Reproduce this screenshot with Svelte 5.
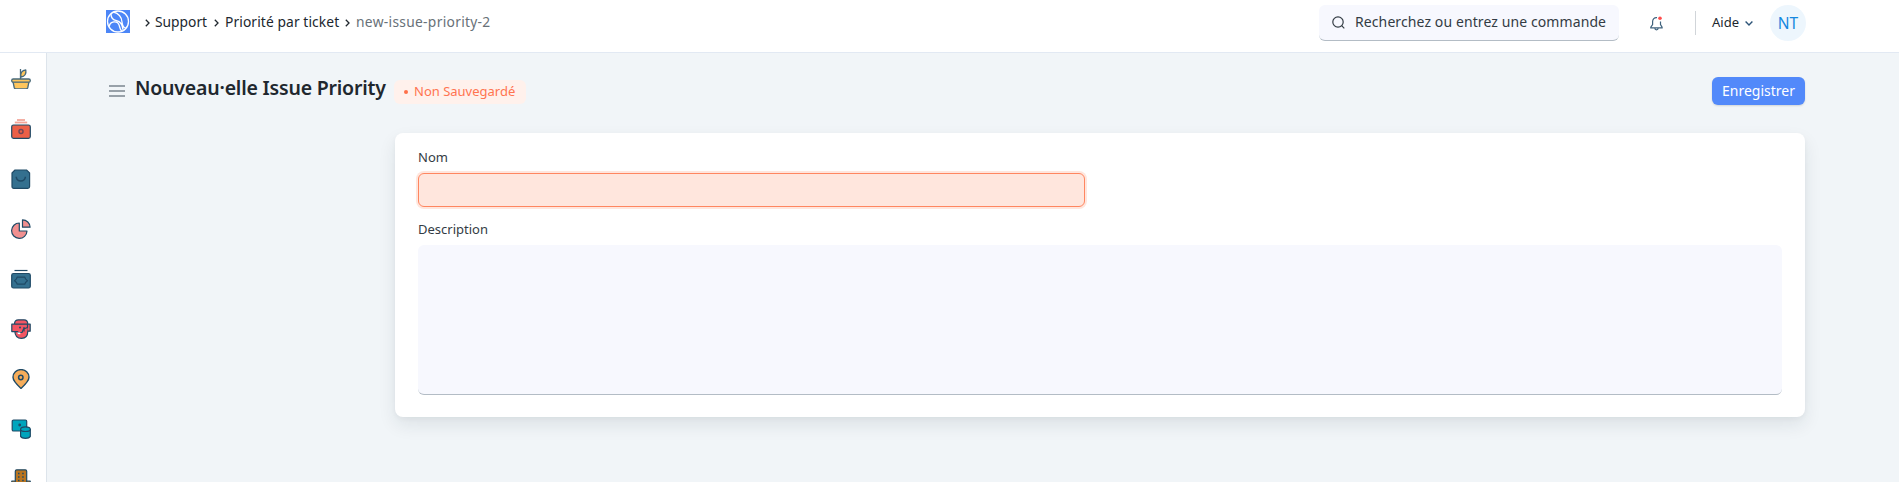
<script>
  const ink = '#1f4a66';
  const modules = ['plant', 'wallet', 'bag', 'pie', 'cash', 'mask', 'pin', 'data', 'building'];
</script>

<div class="page">
  <header>
    <nav class="crumbs">
      <svg class="logo" width="24" height="23" viewBox="0 0 24 23">
        <rect width="24" height="23" fill="#4c86f7" />
        <g fill="none" stroke="#fff" stroke-width="1.300">
          <circle cx="12" cy="11.500" r="10.500" />
          <path d="M7.500 2.200C13 3.500 15.500 7 16 12c.3 3.500 1.500 6 4.200 6.200M5 4C5 8 7 10 10.500 10.600c3.800.8 6 4 6.500 9M3.300 16.500c.5-5.500 8.500-6.500 10-.8.600 2.200.8 4.100 2.500 5.500" />
        </g>
      </svg>
      <svg class="sep" width="5" height="8" viewBox="0 0 5 8"><path d="M.8.8 4 4 .8 7.200" /></svg>
      <span class="c1">Support</span>
      <svg class="sep" width="5" height="8" viewBox="0 0 5 8"><path d="M.8.8 4 4 .8 7.200" /></svg>
      <span class="c2">Priorité par ticket</span>
      <svg class="sep" width="5" height="8" viewBox="0 0 5 8"><path d="M.8.8 4 4 .8 7.200" /></svg>
      <span class="c3">new-issue-priority-2</span>
    </nav>
    <div class="tools">
      <div class="search">
        <svg width="13" height="13" viewBox="0 0 13 13" fill="none" stroke="#333c44" stroke-width="1.2"><circle cx="6" cy="6" r="5.200" /><path d="m9.700 9.700 2.600 2.600" /></svg>
        <span>Recherchez ou entrez une commande</span>
      </div>
      <svg class="bell" width="13" height="15" viewBox="0 0 13 15" fill="none" stroke="#3f627d" stroke-width="1.200">
        <path d="M7 1.600C4.200 1.300 2.600 3.200 2.600 5.600v3L.8 11.200v.6h11.300v-.6l-1.600-2.600V5.500M4.800 12c.1 2.400 3.300 2.400 3.400 0" />
        <circle cx="10" cy="2.300" r="1.800" fill="#ff4d4d" stroke="none" />
      </svg>
      <i class="rule"></i>
      <span class="help">Aide</span>
      <svg class="down" width="8" height="5" viewBox="0 0 8 5"><path d="M.6.600 4 4 7.400.600" fill="none" stroke="#2d5478" stroke-width="1.400" /></svg>
      <span class="avatar"><b>NT</b></span>
    </div>
  </header>

  <div class="body">
    <aside>
      {#each modules as m}
        <svg width="20" height="20" viewBox="0 0 20 20" stroke={ink} stroke-width="1.200" stroke-linejoin="round" fill="none">
          {#if m === 'plant'}
            <g stroke="#47697b" stroke-width="1.300">
              <path d="M9.500 10V0" /><path d="M10 8C9 4 11 1.300 14.800 1c.7 3.800-1 6.500-4.800 7Z" fill="#ffc65c" />
              <path d="M2 12.500h16l-1.200 6q-.3 1.300-1.500 1.300H4.700q-1.200 0-1.500-1.300Z" fill="#ffc65c" /><rect x=".7" y="10" width="18.600" height="3.200" rx="1.500" fill="#ffc65c" />
            </g>
          {:else if m === 'wallet'}
            <path d="M6 1h8" stroke="#e8604a" stroke-width="1" /><path d="M3.800 3.500h12.400" stroke="#f4a497" stroke-width="1.800" />
            <rect x=".7" y="6" width="18.600" height="13.300" rx="1.800" fill="#ec5f47" /><circle cx="10" cy="12.600" r="2" stroke-width="1.500" stroke="#744656" />
          {:else if m === 'bag'}
            <path d="M4 1h11.500L18.600 4v13.500q0 1.800-1.800 1.800H2.800Q1 19.300 1 17.500V4Z" fill="#34708f" /><path d="M5.300 7.800v.6c.7 4.700 8.200 4.700 9 0v-.6" stroke-width="1.500" />
          {:else if m === 'pie'}
            <path d="M8.300 4A7.700 7.700 0 1 0 16 12H8.300Z" fill="#f19090" /><path d="M11.500.8v7.400h7.600A7.600 7.600 0 0 0 11.500.8Z" fill="#f19090" />
          {:else if m === 'cash'}
            <path d="M3.500 1.500h13" /><rect x=".7" y="4.500" width="18.600" height="14.500" rx="1.800" fill="#34708f" /><path d="M6.200 8.200h7.600q.3 2 2.700 3.500-2.400 1.600-2.700 3.500H6.200q-.3-2-2.700-3.500 2.400-1.500 2.700-3.500Z" />
          {:else if m === 'mask'}
            <path d="M3.500 5c0-2.600 1.500-4.200 4-4.200h5.500c2.500 0 3.800 1.600 3.800 4.200v7c0 5-2.800 7.400-6.300 7.400S4 17 3.800 12" fill="#f35563" />
            <path d="M16.500 5.200h2.700v7h-2.700M.8 5.200h15.700V8.500l-4 1.500-1.500 3.500H7.500L6.500 12.600H.8Z" fill="#f35563" /><path d="M13 8v4.500" /><circle cx="9" cy="8.600" r="1" fill={ink} stroke="none" /><path d="M6.300 13.500h3v1.800l-2.300-.3Z" fill="#fff" stroke="none" />
          {:else if m === 'pin'}
            <path d="M10 19.400C6 15.800 2 12 2 8.300a8 7.700 0 0 1 16 0C18 12 14 15.800 10 19.400Z" fill="#f6ad5b" stroke-width="1.400" /><circle cx="9.800" cy="8.500" r="2.200" stroke-width="1.500" />
          {:else if m === 'data'}
            <rect x="1.200" y="1" width="14.500" height="11" rx="1.300" fill="#00a5bd" /><circle cx="8.700" cy="6" r=".8" fill={ink} /><path d="M9.600 10v7.400c1.500 2.600 8.200 2.600 9.700 0V10" fill="#00a5bd" /><ellipse cx="14.450" cy="10.200" rx="4.850" ry="2.300" fill="#00a5bd" />
          {:else}
            <path d="M4.300 20V2.200q0-1.400 1.400-1.400h8.600q1.400 0 1.400 1.400V20M4.300 12H.8v8M15.700 12h3.500v8" fill="#b9741f" /><path d="M7 4.500h1.500m2.700 0h1.500M7 8h1.500m2.700 0h1.500M7 11.500h1.500m2.700 0h1.500" stroke-width="1.500" />
          {/if}
        </svg>
      {/each}
    </aside>

    <main>
      <div class="head">
        <svg class="burger" width="16" height="12" viewBox="0 0 16 12"><path d="M0 1h16M0 6h16M0 11h16" stroke="#98a1a9" stroke-width="1.900" /></svg>
        <h1>Nouveau·elle Issue Priority</h1>
        <span class="badge"><i></i><span>Non Sauvegardé</span></span>
        <button>Enregistrer</button>
      </div>
      <form class="card">
        <label for="nom">Nom</label>
        <input id="nom" />
        <label for="description">Description</label>
        <textarea id="description"></textarea>
      </form>
    </main>
  </div>
</div>

<style>
  :global(body) { margin: 0; background: #f1f5f8; overflow: hidden; }
  .page { height: 482px; overflow: hidden; font-family: "Noto Sans", sans-serif; color: #20272e; font-size: 13px; white-space: nowrap; }
  header { height: 52px; background: #fff; border-bottom: 1px solid #e2e9f3; display: flex; justify-content: space-between; box-sizing: content-box; }
  .crumbs { height: 44px; display: flex; align-items: center; padding-left: 106px; font-size: 13.800px; }
  .logo { margin: 0 15px 2px 0; }
  .sep { fill: none; stroke: #20272e; stroke-width: 1.300; margin-top: 2px; flex: none; }
  .crumbs span { flex: none; padding-bottom: 2px; }
  .c1 { width: 54px; margin: 0 5px; }
  .c2 { width: 115px; margin: 0 5px 0 6px; letter-spacing: .1px; }
  .c3 { color: #687178; margin-left: 6px; letter-spacing: .3px; }
  .tools { display: flex; align-items: center; height: 46px; padding-right: 93px; }
  .search { box-sizing: border-box; width: 300px; height: 36px; border-radius: 6px; background: #f7f8fe; border-bottom: 1px solid #b3bcc5; display: flex; align-items: center; padding-left: 13px; gap: 10px; color: #333c44; font-size: 14px; letter-spacing: .1px; }
  .search span { padding-bottom: 2px; }
  .bell { margin: 0 32px 0 31px; }
  .rule { width: 1px; height: 24px; background: #d1d5d9; }
  .help { width: 28px; margin-left: 16px; padding-bottom: 2px; }
  .down { margin: 0 17px 0 5px; }
  .avatar { width: 36px; height: 36px; border-radius: 50%; background: #edf6fd; color: #1588e0; display: grid; place-items: center; }
  .avatar b { font-weight: 400; font-size: 15.500px; padding-bottom: 1px; }
  .body { display: flex; height: 429px; }
  aside { width: 46px; flex: none; background: #fff; border-right: 1px solid #dde4eb; display: flex; flex-direction: column; gap: 30px; padding-top: 16px; box-sizing: content-box; height: 413px; overflow: hidden; }
  aside svg { flex: none; margin-left: 11px; }
  main { flex: 1; padding: 0 94px 0 62px; }
  .head { height: 80px; display: flex; align-items: center; box-sizing: border-box; }
  .burger { margin: -4px 10px 0 0; }
  h1 { margin: -11px 9px 0 0; width: 250px; font-size: 19.500px; font-weight: 600; letter-spacing: -.2px; }
  .badge { margin-top: -2px; height: 24px; width: 132px; box-sizing: border-box; padding: 0 0 2px 10px; border-radius: 6px; background: #fff1ec; color: #ff7450; display: flex; align-items: center; gap: 6px; }
  .badge i { width: 4px; height: 4px; border-radius: 50%; background: #ff6f48; margin-top: 2px; }
  button { margin: -4px 0 0 auto; width: 93px; height: 28px; padding: 0 0 1px; border: 0; border-radius: 6px; background: #5289fa; color: #fff; font: 14px "Noto Sans", sans-serif; box-shadow: 0 1px 2px #0002; }
  .card { box-sizing: border-box; width: 1410px; margin-left: auto; height: 284px; border-radius: 8px; background: #fff; padding: 15px 23px 0; box-shadow: 0 8px 18px rgba(25, 39, 52, .09), 0 2px 5px rgba(25, 39, 52, .04); display: flex; flex-direction: column; color: #333c44; }
  label { line-height: 18px; align-self: flex-start; font-size: 13px; }
  input { box-sizing: border-box; width: 667px; height: 34px; margin: 7px 0 13px; border: 1px solid #ff8660; border-radius: 6px; background: #ffe6dd; box-shadow: 0 0 0 2px #ffe6dd; outline: 0; }
  textarea { box-sizing: border-box; width: 1364px; height: 150px; margin: 7px 0 0; border: 0; border-bottom: 1px solid #b3bcc5; border-radius: 6px; background: #f7f8fe; resize: none; outline: 0; }
</style>
